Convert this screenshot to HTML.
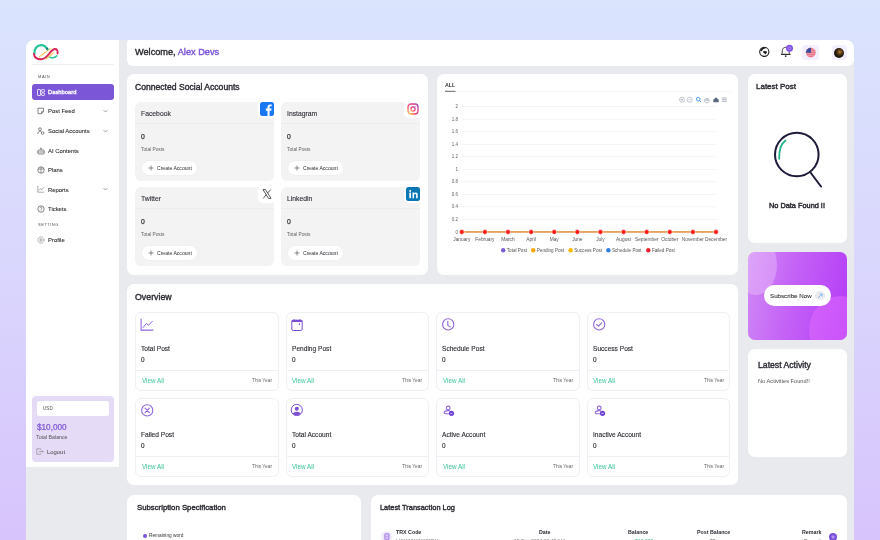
<!DOCTYPE html>
<html><head><meta charset="utf-8">
<style>
*{box-sizing:border-box;margin:0;padding:0}
html,body{width:880px;height:540px;overflow:hidden}
body{font-family:"Liberation Sans",sans-serif;color:#2b2b33;background:linear-gradient(180deg,#dae4fd 0%,#dad8fd 45%,#d7c4fc 100%);position:relative}
.abs{position:absolute}
.app{left:26px;top:40px;width:828px;height:520px;background:#e9eaee;border-radius:8px 8px 0 0;overflow:hidden}
.side{left:26px;top:40px;width:93px;height:427px;background:#fff;border-radius:8px 0 0 0}
.hdr{left:127px;top:40px;width:727px;height:26px;background:#fff;border-radius:3px 8px 6px 6px}
.card{background:#fff;border-radius:7px;position:absolute}
.t{position:absolute;white-space:nowrap;line-height:1;will-change:transform}
</style></head><body>
<div class="abs app"></div>
<div class="abs side"></div>
<div class="abs hdr"></div>

<div class="card" style="left:127px;top:74px;width:301px;height:200.6px"></div>
<div class="card" style="left:437px;top:74px;width:301px;height:200.6px"></div>
<div class="card" style="left:748px;top:74px;width:99px;height:169px"></div>
<div class="card" style="left:748px;top:349px;width:99px;height:108px"></div>
<div class="card" style="left:127px;top:283.8px;width:611px;height:201px"></div>
<div class="card" style="left:127px;top:495px;width:234px;height:60px"></div>
<div class="card" style="left:371px;top:495px;width:476px;height:60px"></div>

<!-- SIDEBAR -->
<svg class="abs" style="left:30px;top:42px" width="32" height="20" viewBox="30 42 32 20">
 <path d="M39.3 56.8 L50.9 48.2" fill="none" stroke="#f2b21e" stroke-width="1.2" stroke-dasharray="1.1 0.5"/>
 <path d="M34.4 54 C33.8 49 37 45.3 41.1 45.1 C44 45 46 46.8 47.6 49.4" fill="none" stroke="#26c59a" stroke-width="2.2" stroke-linecap="round"/>
 <path d="M46.3 47.9 C46.9 48.5 47.3 49 47.6 49.4" fill="none" stroke="#1b6f70" stroke-width="1.6"/>
 <path d="M33.9 54 C34.5 57.6 37.5 59.3 41.1 59.2 C44.5 59 46.5 57 48.5 54.5 C50.5 52 52 49.5 54.6 49 C56.8 48.7 58 50.5 57.5 53.5" fill="none" stroke="#d9285a" stroke-width="1.9" stroke-linecap="round"/>
 <path d="M49.5 57 C51 58.2 54.5 58.5 56.8 55.8" fill="none" stroke="#26c59a" stroke-width="1.5" stroke-linecap="round"/>
 <path d="M45.9 59 L53.7 52.7" fill="none" stroke="#f2b21e" stroke-width="1.1" stroke-dasharray="1.1 0.5"/>
</svg>
<div class="abs" style="left:32px;top:64px;width:82px;height:1px;background:#efeff3"></div>
<div class="t" style="left:37.5px;top:74.8px;font-size:4px;letter-spacing:0.55px;color:#555">MAIN</div>
<div class="abs" style="left:32px;top:84px;width:81.5px;height:15.5px;background:#7b57d8;border-radius:3px"></div>
<svg class="abs" style="left:37px;top:88.5px" width="8" height="7" viewBox="0 0 8 7"><g fill="none" stroke="#fff" stroke-width="0.75"><rect x="0.5" y="0.5" width="3" height="6" rx="0.5"/><rect x="4.6" y="0.5" width="2.8" height="2.6" rx="0.5"/><rect x="4.6" y="3.9" width="2.8" height="2.6" rx="0.5"/></g></svg>
<div class="t" style="left:47.8px;top:89.8px;font-size:5.8px;color:#fff;-webkit-text-stroke:0.3px #fff">Dashboard</div>
<svg class="abs" style="left:36.5px;top:106.9px" width="8" height="8" viewBox="0 0 8 8"><path d="M1 1.2 h5.5 v3.5 l-2 2 h-3.5 z M6.5 4.7 h-2 v2" fill="none" stroke="#555" stroke-width="0.7"/></svg>
<div class="t" style="left:48px;top:109.0px;font-size:5.9px;color:#2b2b2b;-webkit-text-stroke:0.08px #2b2b2b">Post Feed</div>
<svg class="abs" style="left:102.5px;top:108.9px" width="5" height="4" viewBox="0 0 5 4"><path d="M0.5 1 L2.5 3 L4.5 1" fill="none" stroke="#666" stroke-width="0.6"/></svg>
<svg class="abs" style="left:36.5px;top:126.8px" width="8" height="8" viewBox="0 0 8 8"><circle cx="3" cy="2.2" r="1.4" fill="none" stroke="#555" stroke-width="0.7"/><path d="M0.8 7 C0.8 5 2 4.3 3 4.3 C3.6 4.3 4 4.5 4.3 4.7" fill="none" stroke="#555" stroke-width="0.7"/><circle cx="5.6" cy="6" r="1.3" fill="none" stroke="#555" stroke-width="0.7"/></svg>
<div class="t" style="left:48px;top:128.9px;font-size:5.9px;color:#2b2b2b;-webkit-text-stroke:0.08px #2b2b2b">Social Accounts</div>
<svg class="abs" style="left:102.5px;top:128.8px" width="5" height="4" viewBox="0 0 5 4"><path d="M0.5 1 L2.5 3 L4.5 1" fill="none" stroke="#666" stroke-width="0.6"/></svg>
<svg class="abs" style="left:36.5px;top:146.5px" width="8" height="8" viewBox="0 0 8 8"><rect x="0.8" y="3" width="6.4" height="4" rx="1" fill="none" stroke="#555" stroke-width="0.7"/><path d="M4 1 v2 M0.8 5 h6.4" stroke="#555" stroke-width="0.7"/><circle cx="4" cy="1" r="0.6" fill="#555"/></svg>
<div class="t" style="left:48px;top:148.6px;font-size:5.9px;color:#2b2b2b;-webkit-text-stroke:0.08px #2b2b2b">AI Contents</div>
<svg class="abs" style="left:36.5px;top:165.7px" width="8" height="8" viewBox="0 0 8 8"><circle cx="4" cy="4" r="3.2" fill="none" stroke="#555" stroke-width="0.7"/><path d="M1 3 h6 M4 1 v6" stroke="#555" stroke-width="0.6"/></svg>
<div class="t" style="left:48px;top:167.8px;font-size:5.9px;color:#2b2b2b;-webkit-text-stroke:0.08px #2b2b2b">Plans</div>
<svg class="abs" style="left:36.5px;top:185.4px" width="8" height="8" viewBox="0 0 8 8"><path d="M0.8 0.8 v6.4 h6.4" fill="none" stroke="#777" stroke-width="0.6"/><path d="M1.8 5.5 l1.8-2 1.3 1.2 2-2.5" fill="none" stroke="#777" stroke-width="0.6"/></svg>
<div class="t" style="left:48px;top:187.5px;font-size:5.9px;color:#2b2b2b;-webkit-text-stroke:0.08px #2b2b2b">Reports</div>
<svg class="abs" style="left:102.5px;top:187.4px" width="5" height="4" viewBox="0 0 5 4"><path d="M0.5 1 L2.5 3 L4.5 1" fill="none" stroke="#666" stroke-width="0.6"/></svg>
<svg class="abs" style="left:36.5px;top:205.0px" width="8" height="8" viewBox="0 0 8 8"><circle cx="4" cy="4" r="3.2" fill="none" stroke="#555" stroke-width="0.7"/><path d="M3 2.8 C3 1.8 5 1.8 5 3 C5 3.8 4 3.9 4 4.8" fill="none" stroke="#555" stroke-width="0.6"/><circle cx="4" cy="5.8" r="0.35" fill="#555"/></svg>
<div class="t" style="left:48px;top:207.1px;font-size:5.9px;color:#2b2b2b;-webkit-text-stroke:0.08px #2b2b2b">Tickets</div>
<svg class="abs" style="left:36.5px;top:235.7px" width="8" height="8" viewBox="0 0 8 8"><circle cx="4" cy="4" r="3.1" fill="none" stroke="#666" stroke-width="0.7" stroke-dasharray="1 0.5"/><circle cx="4" cy="4" r="1.2" fill="none" stroke="#666" stroke-width="0.6"/></svg>
<div class="t" style="left:48px;top:237.8px;font-size:5.9px;color:#2b2b2b;-webkit-text-stroke:0.08px #2b2b2b">Profile</div>
<div class="t" style="left:37.5px;top:223.2px;font-size:4px;letter-spacing:0.5px;color:#555">SETTING</div>

<div class="abs" style="left:32px;top:396px;width:81.5px;height:66px;background:#e5dbf7;border-radius:4px"></div>
<div class="abs" style="left:37px;top:401px;width:71.5px;height:14.5px;background:#fff;border-radius:2.5px"></div>
<div class="t" style="left:42.8px;top:407.3px;font-size:4.6px;color:#555">USD</div>
<div class="t" style="left:36.6px;top:423.6px;font-size:8.2px;color:#7b52d9;-webkit-text-stroke:0.2px #7b52d9">$10,000</div>
<div class="t" style="left:36.3px;top:434.6px;font-size:5.25px;color:#555">Total Balance</div>
<svg class="abs" style="left:36px;top:448.3px" width="8" height="7" viewBox="0 0 8 7"><path d="M4.8 1.6 V0.8 H0.8 V6.2 H4.8 V5.4 M3 3.5 H7.2 M6 2.3 L7.2 3.5 L6 4.7" fill="none" stroke="#888" stroke-width="0.65"/></svg>
<div class="t" style="left:46.7px;top:449.8px;font-size:5.9px;color:#444">Logout</div>

<!-- HEADER -->
<div class="t" style="left:135.2px;top:48.1px;font-size:9.2px;color:#2b2b33;-webkit-text-stroke:0.38px">Welcome, <span style="color:#7b52d9">Alex Devs</span></div>
<svg class="abs" style="left:755px;top:42px" width="20" height="20" viewBox="755 42 20 20">
<circle cx="764.3" cy="51.8" r="4.6" fill="none" stroke="#1e1e1e" stroke-width="1.1"/>
<path d="M760.2 50.2 C760.8 47.6 763.5 46.6 766.8 47.4 C766 48.4 764.5 48.3 763.4 49 C762.6 49.6 762.3 50.8 761.5 51.2 C760.9 51.3 760.5 50.9 760.2 50.2 Z" fill="#1e1e1e"/>
<path d="M762.9 51.6 C763.8 50.7 765.9 50.8 767.1 51.7 C766.9 52.8 766 53.4 765.6 54.6 C765 54.4 764.6 53.3 763.8 53 C763.3 52.7 762.9 52.3 762.9 51.6 Z" fill="#1e1e1e"/>
</svg>
<svg class="abs" style="left:776px;top:42px" width="20" height="20" viewBox="776 42 20 20">
<path d="M781.3 54.4 C782.3 53.5 782.3 52.5 782.3 50.8 C782.3 48.6 783.7 47.3 785.7 47.3 C787.7 47.3 789.1 48.6 789.1 50.8 C789.1 52.5 789.1 53.5 790.1 54.4 Z" fill="none" stroke="#2a2a2a" stroke-width="0.9" stroke-linejoin="round"/>
<path d="M781 54.4 H790.4" stroke="#2a2a2a" stroke-width="1"/>
<circle cx="785.7" cy="56.1" r="0.9" fill="#2a2a2a"/>
<circle cx="789.5" cy="48.3" r="3.5" fill="#8250e6"/>
<circle cx="789.5" cy="48.3" r="1.4" fill="none" stroke="#c9b2f7" stroke-width="0.6"/>
</svg>
<div class="abs" style="left:802.3px;top:44.6px;width:17px;height:15.6px;background:#f3effc;border-radius:3px"></div>
<svg class="abs" style="left:805px;top:47px" width="12" height="12" viewBox="805 47 12 12"><defs><clipPath id="fc"><circle cx="810.8" cy="52.6" r="4.9"/></clipPath></defs><g clip-path="url(#fc)"><rect x="805" y="47" width="12" height="12" fill="#e8798c"/><rect x="805" y="49" width="12" height="0.6" fill="#f0a9b4"/><rect x="805" y="51" width="12" height="0.6" fill="#f0a9b4"/><rect x="805" y="53" width="12" height="0.6" fill="#f0a9b4"/><rect x="805" y="55" width="12" height="0.6" fill="#f0a9b4"/><rect x="805" y="47" width="6" height="5.8" fill="#3c4d9a"/></g></svg>
<div class="abs" style="left:831.5px;top:44.8px;width:15.4px;height:15.6px;background:#f3effc;border-radius:3px"></div>
<div class="abs" style="left:834.2px;top:47.8px;width:10px;height:10px;border-radius:50%;background:radial-gradient(circle at 58% 40%,#c08a3c 0%,#6a4519 22%,#241a10 50%,#0b0907 100%)"></div>

<!-- SOCIAL -->
<div class="t" style="left:135px;top:82.9px;font-size:8.6px;color:#2b2b33;-webkit-text-stroke:0.38px #2b2b33">Connected Social Accounts</div>
<div class="abs" style="left:135px;top:102.0px;width:139px;height:79px;background:#f3f3f4;border-radius:6px"></div>
<div class="abs" style="left:135px;top:123.0px;width:139px;height:1px;background:#ececee"></div>
<div class="abs" style="left:258px;top:100.0px;width:18px;height:18px;background:#fff;border-radius:5px"></div>
<svg class="abs" style="left:260px;top:102.0px" width="14" height="14" viewBox="0 0 14 14"><rect width="14" height="14" rx="2.5" fill="#1877f2"/><path d="M9.6 14 V8.7 H11.3 L11.6 6.6 H9.6 V5.3 C9.6 4.7 9.8 4.3 10.7 4.3 H11.7 V2.5 C11.5 2.5 10.9 2.4 10.1 2.4 C8.5 2.4 7.5 3.4 7.5 5.1 V6.6 H5.8 V8.7 H7.5 V14 Z" fill="#fff"/></svg>
<div class="t" style="left:141px;top:110.7px;font-size:6.8px;color:#2b2b33;-webkit-text-stroke:0.1px #2b2b33">Facebook</div>
<div class="t" style="left:141px;top:134.1px;font-size:6.8px;color:#333;-webkit-text-stroke:0.25px #333">0</div>
<div class="t" style="left:141px;top:147.5px;font-size:4.8px;color:#666">Total Posts</div>
<div class="abs" style="left:141.5px;top:161.0px;width:55px;height:13.5px;background:#fff;border-radius:7px;box-shadow:0 0 0 0.5px #ececec"></div>
<svg class="abs" style="left:147.5px;top:164.8px" width="6" height="6" viewBox="0 0 6 6"><path d="M3 0.5 V5.5 M0.5 3 H5.5" stroke="#444" stroke-width="0.6"/></svg>
<div class="t" style="left:156.8px;top:165.7px;font-size:5.1px;color:#2b2b33">Create Account</div>
<div class="abs" style="left:281px;top:102.0px;width:139px;height:79px;background:#f3f3f4;border-radius:6px"></div>
<div class="abs" style="left:281px;top:123.0px;width:139px;height:1px;background:#ececee"></div>
<div class="abs" style="left:404px;top:100.0px;width:18px;height:18px;background:#fff;border-radius:5px"></div>
<svg class="abs" style="left:406px;top:102.0px" width="14" height="14" viewBox="0 0 14 14"><defs><linearGradient id="igg" x1="0" y1="1" x2="1" y2="0"><stop offset="0" stop-color="#fdc830"/><stop offset="0.35" stop-color="#f3416a"/><stop offset="0.7" stop-color="#e23b8a"/><stop offset="1" stop-color="#9b45c9"/></linearGradient></defs><rect x="2" y="2" width="10" height="10" rx="3" fill="none" stroke="url(#igg)" stroke-width="1.3"/><circle cx="7" cy="7" r="2.1" fill="none" stroke="url(#igg)" stroke-width="1.2"/><circle cx="9.8" cy="4.2" r="0.5" fill="#e23b8a"/></svg>
<div class="t" style="left:287px;top:110.7px;font-size:6.8px;color:#2b2b33;-webkit-text-stroke:0.1px #2b2b33">Instagram</div>
<div class="t" style="left:287px;top:134.1px;font-size:6.8px;color:#333;-webkit-text-stroke:0.25px #333">0</div>
<div class="t" style="left:287px;top:147.5px;font-size:4.8px;color:#666">Total Posts</div>
<div class="abs" style="left:287.5px;top:161.0px;width:55px;height:13.5px;background:#fff;border-radius:7px;box-shadow:0 0 0 0.5px #ececec"></div>
<svg class="abs" style="left:293.5px;top:164.8px" width="6" height="6" viewBox="0 0 6 6"><path d="M3 0.5 V5.5 M0.5 3 H5.5" stroke="#444" stroke-width="0.6"/></svg>
<div class="t" style="left:302.8px;top:165.7px;font-size:5.1px;color:#2b2b33">Create Account</div>
<div class="abs" style="left:135px;top:187.2px;width:139px;height:79px;background:#f3f3f4;border-radius:6px"></div>
<div class="abs" style="left:135px;top:208.2px;width:139px;height:1px;background:#ececee"></div>
<div class="abs" style="left:258px;top:185.2px;width:18px;height:18px;background:#fff;border-radius:5px"></div>
<svg class="abs" style="left:260px;top:187.2px" width="14" height="14" viewBox="0 0 14 14"><path d="M3 2.6 H5.5 L11 11.4 H8.5 Z" fill="none" stroke="#444" stroke-width="0.9"/><path d="M10.6 2.6 L7.6 6 M6.3 7.5 L3.3 11.4" stroke="#444" stroke-width="0.9"/></svg>
<div class="t" style="left:141px;top:195.9px;font-size:6.8px;color:#2b2b33;-webkit-text-stroke:0.1px #2b2b33">Twitter</div>
<div class="t" style="left:141px;top:219.3px;font-size:6.8px;color:#333;-webkit-text-stroke:0.25px #333">0</div>
<div class="t" style="left:141px;top:232.7px;font-size:4.8px;color:#666">Total Posts</div>
<div class="abs" style="left:141.5px;top:246.2px;width:55px;height:13.5px;background:#fff;border-radius:7px;box-shadow:0 0 0 0.5px #ececec"></div>
<svg class="abs" style="left:147.5px;top:250.0px" width="6" height="6" viewBox="0 0 6 6"><path d="M3 0.5 V5.5 M0.5 3 H5.5" stroke="#444" stroke-width="0.6"/></svg>
<div class="t" style="left:156.8px;top:250.9px;font-size:5.1px;color:#2b2b33">Create Account</div>
<div class="abs" style="left:281px;top:187.2px;width:139px;height:79px;background:#f3f3f4;border-radius:6px"></div>
<div class="abs" style="left:281px;top:208.2px;width:139px;height:1px;background:#ececee"></div>
<div class="abs" style="left:404px;top:185.2px;width:18px;height:18px;background:#fff;border-radius:5px"></div>
<svg class="abs" style="left:406px;top:187.2px" width="14" height="14" viewBox="0 0 14 14"><rect width="14" height="14" rx="2.5" fill="#0a77b5"/><rect x="3.3" y="5.6" width="1.7" height="5.6" fill="#fff"/><circle cx="4.15" cy="3.9" r="1" fill="#fff"/><path d="M6.5 11.2 V5.6 H8.1 V6.4 C8.5 5.8 9.1 5.5 9.9 5.5 C11.2 5.5 11.7 6.3 11.7 7.8 V11.2 H10.1 V8.1 C10.1 7.3 9.8 6.9 9.2 6.9 C8.5 6.9 8.1 7.4 8.1 8.2 V11.2 Z" fill="#fff"/></svg>
<div class="t" style="left:287px;top:195.9px;font-size:6.8px;color:#2b2b33;-webkit-text-stroke:0.1px #2b2b33">Linkedin</div>
<div class="t" style="left:287px;top:219.3px;font-size:6.8px;color:#333;-webkit-text-stroke:0.25px #333">0</div>
<div class="t" style="left:287px;top:232.7px;font-size:4.8px;color:#666">Total Posts</div>
<div class="abs" style="left:287.5px;top:246.2px;width:55px;height:13.5px;background:#fff;border-radius:7px;box-shadow:0 0 0 0.5px #ececec"></div>
<svg class="abs" style="left:293.5px;top:250.0px" width="6" height="6" viewBox="0 0 6 6"><path d="M3 0.5 V5.5 M0.5 3 H5.5" stroke="#444" stroke-width="0.6"/></svg>
<div class="t" style="left:302.8px;top:250.9px;font-size:5.1px;color:#2b2b33">Create Account</div>

<!-- CHART -->
<svg class="abs" style="left:437px;top:74px;will-change:transform" width="301" height="200" viewBox="437 74 301 200" font-family="Liberation Sans">
<text x="445" y="86.7" font-size="5.3" font-weight="700" fill="#333">ALL</text>
<rect x="445" y="91" width="285.5" height="0.6" fill="#f0f0f4"/>
<rect x="445" y="90.8" width="10.5" height="1" fill="#666"/>
<text x="457.9" y="108.30" font-size="4.5" fill="#666" text-anchor="end">2</text>
<rect x="461.6" y="106.40" width="254.4" height="0.6" fill="#ededf0"/>
<text x="457.9" y="120.82" font-size="4.5" fill="#666" text-anchor="end">1.8</text>
<rect x="461.6" y="118.92" width="254.4" height="0.6" fill="#ededf0"/>
<text x="457.9" y="133.34" font-size="4.5" fill="#666" text-anchor="end">1.6</text>
<rect x="461.6" y="131.44" width="254.4" height="0.6" fill="#ededf0"/>
<text x="457.9" y="145.86" font-size="4.5" fill="#666" text-anchor="end">1.4</text>
<rect x="461.6" y="143.96" width="254.4" height="0.6" fill="#ededf0"/>
<text x="457.9" y="158.38" font-size="4.5" fill="#666" text-anchor="end">1.2</text>
<rect x="461.6" y="156.48" width="254.4" height="0.6" fill="#ededf0"/>
<text x="457.9" y="170.90" font-size="4.5" fill="#666" text-anchor="end">1</text>
<rect x="461.6" y="169.00" width="254.4" height="0.6" fill="#ededf0"/>
<text x="457.9" y="183.42" font-size="4.5" fill="#666" text-anchor="end">0.8</text>
<rect x="461.6" y="181.52" width="254.4" height="0.6" fill="#ededf0"/>
<text x="457.9" y="195.94" font-size="4.5" fill="#666" text-anchor="end">0.6</text>
<rect x="461.6" y="194.04" width="254.4" height="0.6" fill="#ededf0"/>
<text x="457.9" y="208.46" font-size="4.5" fill="#666" text-anchor="end">0.4</text>
<rect x="461.6" y="206.56" width="254.4" height="0.6" fill="#ededf0"/>
<text x="457.9" y="220.98" font-size="4.5" fill="#666" text-anchor="end">0.2</text>
<rect x="461.6" y="219.08" width="254.4" height="0.6" fill="#ededf0"/>
<text x="457.9" y="233.50" font-size="4.5" fill="#666" text-anchor="end">0</text>
<rect x="462" y="231.2" width="254" height="1.5" fill="#e38c3a"/>
<circle cx="461.80" cy="232" r="2.4" fill="#ff1a1a" stroke="#fff" stroke-width="0.5"/>
<text x="461.80" y="241.1" font-size="4.8" fill="#555" text-anchor="middle">January</text>
<circle cx="484.91" cy="232" r="2.4" fill="#ff1a1a" stroke="#fff" stroke-width="0.5"/>
<text x="484.91" y="241.1" font-size="4.8" fill="#555" text-anchor="middle">February</text>
<circle cx="508.02" cy="232" r="2.4" fill="#ff1a1a" stroke="#fff" stroke-width="0.5"/>
<text x="508.02" y="241.1" font-size="4.8" fill="#555" text-anchor="middle">March</text>
<circle cx="531.13" cy="232" r="2.4" fill="#ff1a1a" stroke="#fff" stroke-width="0.5"/>
<text x="531.13" y="241.1" font-size="4.8" fill="#555" text-anchor="middle">April</text>
<circle cx="554.24" cy="232" r="2.4" fill="#ff1a1a" stroke="#fff" stroke-width="0.5"/>
<text x="554.24" y="241.1" font-size="4.8" fill="#555" text-anchor="middle">May</text>
<circle cx="577.35" cy="232" r="2.4" fill="#ff1a1a" stroke="#fff" stroke-width="0.5"/>
<text x="577.35" y="241.1" font-size="4.8" fill="#555" text-anchor="middle">June</text>
<circle cx="600.46" cy="232" r="2.4" fill="#ff1a1a" stroke="#fff" stroke-width="0.5"/>
<text x="600.46" y="241.1" font-size="4.8" fill="#555" text-anchor="middle">July</text>
<circle cx="623.57" cy="232" r="2.4" fill="#ff1a1a" stroke="#fff" stroke-width="0.5"/>
<text x="623.57" y="241.1" font-size="4.8" fill="#555" text-anchor="middle">August</text>
<circle cx="646.68" cy="232" r="2.4" fill="#ff1a1a" stroke="#fff" stroke-width="0.5"/>
<text x="646.68" y="241.1" font-size="4.8" fill="#555" text-anchor="middle">September</text>
<circle cx="669.79" cy="232" r="2.4" fill="#ff1a1a" stroke="#fff" stroke-width="0.5"/>
<text x="669.79" y="241.1" font-size="4.8" fill="#555" text-anchor="middle">October</text>
<circle cx="692.90" cy="232" r="2.4" fill="#ff1a1a" stroke="#fff" stroke-width="0.5"/>
<text x="692.90" y="241.1" font-size="4.8" fill="#555" text-anchor="middle">November</text>
<circle cx="716.01" cy="232" r="2.4" fill="#ff1a1a" stroke="#fff" stroke-width="0.5"/>
<text x="716.01" y="241.1" font-size="4.8" fill="#555" text-anchor="middle">December</text>
<circle cx="503.2" cy="250.3" r="2.2" fill="#7b5bd6"/>
<text x="506.8" y="251.9" font-size="4.6" fill="#555">Total Post</text>
<circle cx="533.2" cy="250.3" r="2.2" fill="#f7a800"/>
<text x="536.8" y="251.9" font-size="4.6" fill="#555">Pending Post</text>
<circle cx="570.6" cy="250.3" r="2.2" fill="#f5b800"/>
<text x="574.2" y="251.9" font-size="4.6" fill="#555">Success Post</text>
<circle cx="608.4" cy="250.3" r="2.2" fill="#2f7de1"/>
<text x="612.0" y="251.9" font-size="4.6" fill="#555">Schedule Post</text>
<circle cx="648.3" cy="250.3" r="2.2" fill="#f5222d"/>
<text x="651.9" y="251.9" font-size="4.6" fill="#555">Failed Post</text>
<g fill="none" stroke="#9aa3b0" stroke-width="0.6">
<circle cx="682" cy="99.7" r="2.5"/><path d="M680.8 99.7 h2.4 M682 98.5 v2.4"/>
<circle cx="689.7" cy="99.7" r="2.5"/><path d="M688.5 99.7 h2.4"/>
</g>
<circle cx="698.2" cy="99.2" r="1.8" fill="none" stroke="#3a8ee6" stroke-width="0.9"/><path d="M699.5 100.5 l1.6 1.6" stroke="#3a8ee6" stroke-width="1"/>
<path d="M705 101 v-2.5 M706.3 101 v-3 M707.6 101 v-3 M708.9 101 v-2.5 M704.5 100.5 c0 1.5 1 2.3 2.5 2.3 c1.5 0 2.2-0.8 2.2-2" fill="none" stroke="#9aa3b0" stroke-width="0.7"/>
<path d="M713.3 99.8 L716 97.3 L718.7 99.8 V102.3 H713.3 Z" fill="#5a6b80"/>
<path d="M721.8 98 h5 M721.8 99.7 h5 M721.8 101.4 h5" stroke="#9aa3b0" stroke-width="0.8"/>
</svg>

<!-- LATEST POST -->
<div class="t" style="left:756px;top:83.4px;font-size:8px;color:#2b2b33;-webkit-text-stroke:0.38px #2b2b33">Latest Post</div>
<svg class="abs" style="left:765px;top:125px" width="65" height="70" viewBox="765 125 65 70">
<circle cx="796.8" cy="154.5" r="21.8" fill="none" stroke="#1d1b3a" stroke-width="2"/>
<path d="M810.5 172.5 L821 186.5" stroke="#1d1b3a" stroke-width="2" stroke-linecap="round"/>
<path d="M785.5 140.6 C781.5 143.5 779 149 779.2 158.8" fill="none" stroke="#20b58a" stroke-width="1.8" stroke-linecap="round"/>
</svg>
<div class="t" style="left:769px;top:202.3px;font-size:7.35px;color:#2b2b33;-webkit-text-stroke:0.45px #2b2b33">No Data Found !!</div>

<!-- SUBSCRIBE -->
<div class="abs" style="left:748px;top:252px;width:99px;height:88px;border-radius:7px;overflow:hidden;background:linear-gradient(100deg,#d08af6 0%,#c461f6 45%,#b43cf7 100%)">
  <div class="abs" style="left:-13px;top:-17px;width:42px;height:60px;border-radius:50%;background:rgba(255,235,255,0.28)"></div>
  <div class="abs" style="left:61px;top:44px;width:62px;height:68px;border-radius:50%;background:rgba(230,110,255,0.45)"></div>
  <div class="abs" style="left:15.5px;top:33.3px;width:67.7px;height:20.4px;border-radius:10.2px;background:#fff"></div>
  <div class="t" style="left:22px;top:40.5px;font-size:6.2px;color:#333;-webkit-text-stroke:0.1px #333">Subscribe Now</div>
  <div class="abs" style="left:67.4px;top:39px;width:9.4px;height:9.4px;border-radius:50%;background:#ebebf0"></div>
  <svg class="abs" style="left:69.3px;top:40.9px" width="6" height="6" viewBox="0 0 6 6"><path d="M1 5 L5 1 M2.6 1 H5 V3.4" fill="none" stroke="#5aa6f0" stroke-width="0.7"/></svg>
</div>

<!-- LATEST ACTIVITY -->
<div class="t" style="left:758px;top:361.3px;font-size:8.67px;color:#2b2b33;-webkit-text-stroke:0.38px #2b2b33">Latest Activity</div>
<div class="t" style="left:758px;top:379.1px;font-size:5.7px;color:#555">No Activities Found!!</div>

<!-- OVERVIEW -->
<div class="t" style="left:135px;top:292.6px;font-size:8.8px;color:#2b2b33;-webkit-text-stroke:0.38px #2b2b33">Overview</div>
<div class="abs" style="left:135px;top:312.2px;width:143.6px;height:78.4px;border:0.8px solid #efeff5;border-radius:6px"></div>
<div class="abs" style="left:135px;top:370.2px;width:143.6px;height:0.8px;background:#efeff5"></div>
<svg class="abs" style="left:135px;top:312.2px" width="24" height="24" viewBox="-5 -6 24 24"><path d="M1.1 1 V12.1 H13" fill="none" stroke="#8f66dc" stroke-width="1.1" stroke-linecap="round"/><path d="M3.1 9.5 L6.4 5.4 L8.4 7.4 L12.3 3.3" fill="none" stroke="#8f66dc" stroke-width="1" stroke-linecap="round" stroke-linejoin="round"/></svg>
<div class="t" style="left:141px;top:345.7px;font-size:6.6px;color:#2b2b33;-webkit-text-stroke:0.12px #2b2b33">Total Post</div>
<div class="t" style="left:141px;top:357.2px;font-size:6.4px;color:#333;-webkit-text-stroke:0.15px #333">0</div>
<div class="t" style="left:141.7px;top:378.0px;font-size:6.3px;color:#3cc49a">View All</div>
<div class="t" style="left:251.8px;top:378.5px;width:20px;text-align:right;font-size:4.8px;color:#666">This Year</div>
<div class="abs" style="left:285.5px;top:312.2px;width:143.6px;height:78.4px;border:0.8px solid #efeff5;border-radius:6px"></div>
<div class="abs" style="left:285.5px;top:370.2px;width:143.6px;height:0.8px;background:#efeff5"></div>
<svg class="abs" style="left:285.5px;top:313.8px" width="24" height="24" viewBox="0 0 24 24"><rect x="5.8" y="6.2" width="10.4" height="10.3" rx="1.4" fill="none" stroke="#7c4fd6" stroke-width="1"/><rect x="5.8" y="6" width="10.4" height="2" fill="#7c4fd6"/><path d="M8 5.2 v1.2 M14 5.2 v1.2" stroke="#7c4fd6" stroke-width="1.1"/><rect x="12.8" y="9.3" width="1.2" height="1.6" rx="0.5" fill="#7c4fd6"/></svg>
<div class="t" style="left:291.5px;top:345.7px;font-size:6.6px;color:#2b2b33;-webkit-text-stroke:0.12px #2b2b33">Pending Post</div>
<div class="t" style="left:291.5px;top:357.2px;font-size:6.4px;color:#333;-webkit-text-stroke:0.15px #333">0</div>
<div class="t" style="left:292.2px;top:378.0px;font-size:6.3px;color:#3cc49a">View All</div>
<div class="t" style="left:402.3px;top:378.5px;width:20px;text-align:right;font-size:4.8px;color:#666">This Year</div>
<div class="abs" style="left:436px;top:312.2px;width:143.6px;height:78.4px;border:0.8px solid #efeff5;border-radius:6px"></div>
<div class="abs" style="left:436px;top:370.2px;width:143.6px;height:0.8px;background:#efeff5"></div>
<svg class="abs" style="left:436px;top:313.8px" width="24" height="24" viewBox="0 0 24 24"><circle cx="12.2" cy="10.4" r="5.6" fill="none" stroke="#8f66dc" stroke-width="1.1"/><path d="M11.8 7.4 V11.4 L14.3 12.9" fill="none" stroke="#8f66dc" stroke-width="1.1" stroke-linecap="round"/></svg>
<div class="t" style="left:442px;top:345.7px;font-size:6.6px;color:#2b2b33;-webkit-text-stroke:0.12px #2b2b33">Schedule Post</div>
<div class="t" style="left:442px;top:357.2px;font-size:6.4px;color:#333;-webkit-text-stroke:0.15px #333">0</div>
<div class="t" style="left:442.7px;top:378.0px;font-size:6.3px;color:#3cc49a">View All</div>
<div class="t" style="left:552.8000000000001px;top:378.5px;width:20px;text-align:right;font-size:4.8px;color:#666">This Year</div>
<div class="abs" style="left:586.7px;top:312.2px;width:143.6px;height:78.4px;border:0.8px solid #efeff5;border-radius:6px"></div>
<div class="abs" style="left:586.7px;top:370.2px;width:143.6px;height:0.8px;background:#efeff5"></div>
<svg class="abs" style="left:586.7px;top:313.8px" width="24" height="24" viewBox="0 0 24 24"><circle cx="12.2" cy="10.4" r="5.6" fill="none" stroke="#8f66dc" stroke-width="1.1"/><path d="M9.7 10.5 L11.5 12.2 L14.7 8.8" fill="none" stroke="#8f66dc" stroke-width="1.1" stroke-linecap="round" stroke-linejoin="round"/></svg>
<div class="t" style="left:592.7px;top:345.7px;font-size:6.6px;color:#2b2b33;-webkit-text-stroke:0.12px #2b2b33">Success Post</div>
<div class="t" style="left:592.7px;top:357.2px;font-size:6.4px;color:#333;-webkit-text-stroke:0.15px #333">0</div>
<div class="t" style="left:593.4000000000001px;top:378.0px;font-size:6.3px;color:#3cc49a">View All</div>
<div class="t" style="left:703.5000000000001px;top:378.5px;width:20px;text-align:right;font-size:4.8px;color:#666">This Year</div>
<div class="abs" style="left:135px;top:398.4px;width:143.6px;height:78.4px;border:0.8px solid #efeff5;border-radius:6px"></div>
<div class="abs" style="left:135px;top:456.4px;width:143.6px;height:0.8px;background:#efeff5"></div>
<svg class="abs" style="left:135px;top:400.0px" width="24" height="24" viewBox="0 0 24 24"><circle cx="12.2" cy="10.4" r="5.6" fill="none" stroke="#8f66dc" stroke-width="1.1"/><path d="M10 8.2 L14.4 12.6 M14.4 8.2 L10 12.6" fill="none" stroke="#8f66dc" stroke-width="1.1" stroke-linecap="round"/></svg>
<div class="t" style="left:141px;top:431.9px;font-size:6.6px;color:#2b2b33;-webkit-text-stroke:0.12px #2b2b33">Failed Post</div>
<div class="t" style="left:141px;top:443.4px;font-size:6.4px;color:#333;-webkit-text-stroke:0.15px #333">0</div>
<div class="t" style="left:141.7px;top:464.2px;font-size:6.3px;color:#3cc49a">View All</div>
<div class="t" style="left:251.8px;top:464.7px;width:20px;text-align:right;font-size:4.8px;color:#666">This Year</div>
<div class="abs" style="left:285.5px;top:398.4px;width:143.6px;height:78.4px;border:0.8px solid #efeff5;border-radius:6px"></div>
<div class="abs" style="left:285.5px;top:456.4px;width:143.6px;height:0.8px;background:#efeff5"></div>
<svg class="abs" style="left:285.5px;top:400.0px" width="24" height="24" viewBox="0 0 24 24"><defs><clipPath id="uc"><circle cx="10.8" cy="10" r="5.4"/></clipPath></defs><circle cx="10.8" cy="10" r="5.6" fill="none" stroke="#7c4fd6" stroke-width="1"/><circle cx="10.8" cy="8.8" r="2" fill="#7c4fd6"/><g clip-path="url(#uc)"><ellipse cx="10.8" cy="15.6" rx="5" ry="3.8" fill="#7c4fd6"/></g></svg>
<div class="t" style="left:291.5px;top:431.9px;font-size:6.6px;color:#2b2b33;-webkit-text-stroke:0.12px #2b2b33">Total Account</div>
<div class="t" style="left:291.5px;top:443.4px;font-size:6.4px;color:#333;-webkit-text-stroke:0.15px #333">0</div>
<div class="t" style="left:292.2px;top:464.2px;font-size:6.3px;color:#3cc49a">View All</div>
<div class="t" style="left:402.3px;top:464.7px;width:20px;text-align:right;font-size:4.8px;color:#666">This Year</div>
<div class="abs" style="left:436px;top:398.4px;width:143.6px;height:78.4px;border:0.8px solid #efeff5;border-radius:6px"></div>
<div class="abs" style="left:436px;top:456.4px;width:143.6px;height:0.8px;background:#efeff5"></div>
<svg class="abs" style="left:436px;top:400.0px" width="24" height="24" viewBox="0 0 24 24"><circle cx="12.2" cy="8" r="1.9" fill="none" stroke="#8f66dc" stroke-width="1.1"/><path d="M14 11.1 C13.5 10.7 13 10.6 12.2 10.6 C10 10.6 8.2 11.4 8.2 12.8 C8.2 13.4 8.6 13.7 9.3 13.7 H12.8" fill="none" stroke="#8f66dc" stroke-width="1.1"/><circle cx="15.5" cy="13.3" r="2.6" fill="#6a3fd0"/><path d="M14.4 13.3 L15.2 14.1 L16.6 12.6" fill="none" stroke="#fff" stroke-width="0.6"/></svg>
<div class="t" style="left:442px;top:431.9px;font-size:6.6px;color:#2b2b33;-webkit-text-stroke:0.12px #2b2b33">Active Account</div>
<div class="t" style="left:442px;top:443.4px;font-size:6.4px;color:#333;-webkit-text-stroke:0.15px #333">0</div>
<div class="t" style="left:442.7px;top:464.2px;font-size:6.3px;color:#3cc49a">View All</div>
<div class="t" style="left:552.8000000000001px;top:464.7px;width:20px;text-align:right;font-size:4.8px;color:#666">This Year</div>
<div class="abs" style="left:586.7px;top:398.4px;width:143.6px;height:78.4px;border:0.8px solid #efeff5;border-radius:6px"></div>
<div class="abs" style="left:586.7px;top:456.4px;width:143.6px;height:0.8px;background:#efeff5"></div>
<svg class="abs" style="left:586.7px;top:400.0px" width="24" height="24" viewBox="0 0 24 24"><circle cx="12.2" cy="8" r="1.9" fill="none" stroke="#8f66dc" stroke-width="1.1"/><path d="M14 11.1 C13.5 10.7 13 10.6 12.2 10.6 C10 10.6 8.2 11.4 8.2 12.8 C8.2 13.4 8.6 13.7 9.3 13.7 H12.8" fill="none" stroke="#8f66dc" stroke-width="1.1"/><circle cx="15.5" cy="13.3" r="2.6" fill="#6a3fd0"/><path d="M14.3 13.3 H16.7" fill="none" stroke="#fff" stroke-width="0.7"/></svg>
<div class="t" style="left:592.7px;top:431.9px;font-size:6.6px;color:#2b2b33;-webkit-text-stroke:0.12px #2b2b33">Inactive Account</div>
<div class="t" style="left:592.7px;top:443.4px;font-size:6.4px;color:#333;-webkit-text-stroke:0.15px #333">0</div>
<div class="t" style="left:593.4000000000001px;top:464.2px;font-size:6.3px;color:#3cc49a">View All</div>
<div class="t" style="left:703.5000000000001px;top:464.7px;width:20px;text-align:right;font-size:4.8px;color:#666">This Year</div>

<!-- BOTTOM -->
<div class="t" style="left:137px;top:503.9px;font-size:7.77px;color:#2b2b33;-webkit-text-stroke:0.38px #2b2b33">Subscription Specification</div>
<div class="abs" style="left:142.8px;top:533.6px;width:4.4px;height:4.4px;border-radius:50%;background:#7b52d9"></div>
<div class="t" style="left:148.6px;top:533.5px;font-size:4.75px;color:#333">Remaining word</div>

<div class="t" style="left:380.4px;top:504.1px;font-size:7.41px;color:#2b2b33;-webkit-text-stroke:0.38px #2b2b33">Latest Transaction Log</div>
<div class="abs" style="left:381px;top:531px;width:11px;height:11px;border-radius:50%;background:#f1ebfc"></div>
<svg class="abs" style="left:383.5px;top:533px" width="6" height="7" viewBox="0 0 6 7"><rect x="0.6" y="0.5" width="4.6" height="6.2" rx="1.2" fill="#c6a8f2" stroke="#9b72e3" stroke-width="0.6"/><path d="M1.8 2.2 h2.2 M1.8 4.8 h2.2" stroke="#fff" stroke-width="0.5"/></svg>
<div class="t" style="left:396px;top:529.8px;font-size:5.3px;font-weight:700;color:#2b2b33">TRX Code</div>
<div class="t" style="left:539px;top:529.8px;font-size:5.3px;font-weight:700;color:#2b2b33">Date</div>
<div class="t" style="left:628.2px;top:529.8px;font-size:5.3px;font-weight:700;color:#2b2b33">Balance</div>
<div class="t" style="left:696.7px;top:529.8px;font-size:5.3px;font-weight:700;color:#2b2b33">Post Balance</div>
<div class="t" style="left:801.8px;top:529.8px;font-size:5.3px;font-weight:700;color:#2b2b33">Remark</div>
<div class="abs" style="left:828.8px;top:532.5px;width:8px;height:8px;border-radius:50%;background:#7b52d9"></div>
<svg class="abs" style="left:830.8px;top:534.5px" width="4" height="4" viewBox="0 0 4 4"><path d="M2 0.3 V3.7 M0.3 2 H3.7" stroke="#d9c9fb" stroke-width="0.7"/></svg>
<div class="t" style="left:396px;top:538.6px;font-size:5px;color:#777">LXXXXXXXX00DU</div>
<div class="t" style="left:513.6px;top:538.6px;font-size:5px;color:#777">15 Dec 2024 03:45 AM</div>
<div class="t" style="left:631px;top:538.6px;font-size:5px;color:#2bbf8e">+ $10,000</div>
<div class="t" style="left:710px;top:538.6px;font-size:5px;color:#555">$0</div>
<div class="t" style="left:803.8px;top:538.6px;font-size:5px;color:#555">Deposit</div>
</body></html>
